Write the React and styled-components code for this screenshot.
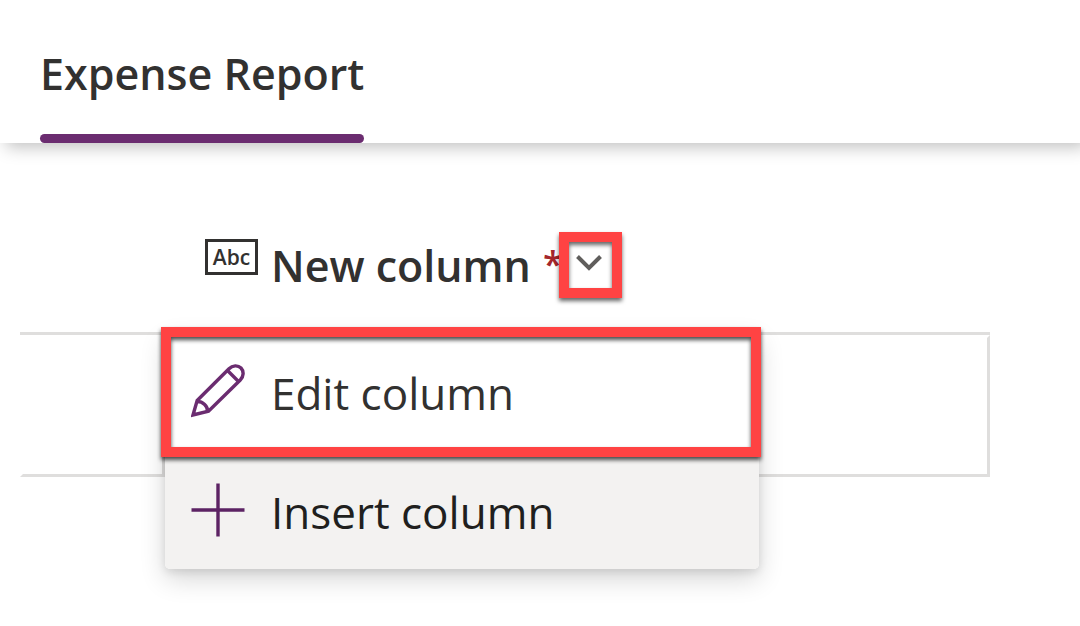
import React from "react";
import styled, { createGlobalStyle } from "styled-components";

const GlobalStyle = createGlobalStyle`
  *, *::before, *::after { box-sizing: border-box; }
  body {
    margin: 0;
    background: #fff;
    color: #323130;
    font-family: "Segoe UI", "Open Sans", "Noto Sans", sans-serif;
    font-size: 44px;
    line-height: 60px;
  }
  button { font: inherit; color: inherit; }
`;

const Page = styled.div`
  min-height: 100vh;
`;

const TabBar = styled.header`
  display: flex;
  padding: 0 40px;
  background: #fff;
  box-shadow: 6px 4px 16px rgba(0, 0, 0, 0.25);
`;

const Tab = styled.button`
  padding: 44px 0 0;
  border: 0;
  background: none;
  font-size: 43px;
  font-weight: 600;
  cursor: pointer;

  &::after {
    content: "";
    display: block;
    height: 9px;
    margin-top: 30px;
    border-radius: 5px;
    background: #6b2c70;
  }
`;

const Main = styled.main`
  padding: 80px 90px 40px 20px;
`;

const Grid = styled.table`
  width: 100%;
  border-collapse: separate;
  border-spacing: 0;
  table-layout: fixed;
`;

const HeadCell = styled.th`
  width: ${(p) => (p.$narrow ? "142px" : "auto")};
  height: 112px;
  padding: 0 0 0 ${(p) => (p.$narrow ? "0" : "43px")};
  border-bottom: 3px solid #dfdedd;
  vertical-align: top;
  text-align: left;
  font-size: 43px;
  font-weight: 600;
`;

const Heading = styled.div`
  display: flex;
  align-items: flex-start;
  padding-top: 9px;
`;

const HeadingText = styled.span`
  padding-top: 4px;
`;

const TypeBadge = styled.span`
  display: flex;
  align-items: center;
  justify-content: center;
  width: 53px;
  height: 36px;
  margin: 7px 13px 0 0;
  border: 3px solid #323130;
  font-size: 21px;
  line-height: 28px;
  font-weight: 600;
`;

const Required = styled.span`
  width: 16px;
  margin-left: 12px;
  color: #a4262c;
  font-size: 36px;
  line-height: 64px;
`;

const MenuToggle = styled.button`
  position: relative;
  display: flex;
  align-items: center;
  justify-content: center;
  width: 63px;
  height: 66px;
  padding: 0 2px 4px 0;
  border: 0;
  background: none;
  cursor: pointer;

  &::after {
    content: "";
    position: absolute;
    inset: 0;
    border: 10px solid #ff4343;
    filter: drop-shadow(0 3px 2px rgba(0, 0, 0, 0.6));
  }
`;

const Cell = styled.td`
  position: relative;
  height: 142px;
  padding: 0;
  border: 3px solid #dfdedd;
  border-top-color: transparent;
  ${(p) => p.$lead && "border-left-color: transparent; border-right: 0;"}
`;

const Menu = styled.div`
  position: absolute;
  top: -7px;
  left: 0;
  width: 594px;
  border-radius: 5px;
  background: #fff;
  box-shadow: 0 10px 26px rgba(0, 0, 0, 0.16), 0 3px 8px rgba(0, 0, 0, 0.1);
`;

const MenuItem = styled.button`
  display: flex;
  align-items: center;
  gap: 26px;
  width: 100%;
  height: 119px;
  padding: 0 26px;
  border: 0;
  border-radius: ${(p) => (p.$active ? "0 0 5px 5px" : "5px 5px 0 0")};
  background: ${(p) => (p.$active ? "#f3f2f1" : "#fff")};
  color: ${(p) => (p.$active ? "#201f1e" : "#323130")};
  text-align: left;
  cursor: pointer;
`;

const ItemLabel = styled.span`
  padding-top: 4px;
`;

const ItemHighlight = styled.div`
  position: absolute;
  top: -4px;
  left: -4px;
  width: 600px;
  height: 130px;
  border: 10px solid #ff4343;
  filter: drop-shadow(0 3px 2px rgba(0, 0, 0, 0.7));
  pointer-events: none;
`;

const Icon = styled.svg`
  flex: none;
  display: block;
  fill: none;
`;

function ChevronIcon() {
  return (
    <Icon width="28" height="18" viewBox="0 0 28 18" stroke="#605e5c" strokeWidth="4" aria-hidden="true">
      <path d="M2.5 2.5 L14 14 L25.5 2.5" />
    </Icon>
  );
}

function PencilIcon() {
  return (
    <Icon width="54" height="54" viewBox="0 0 54 54" stroke="#6b2c70" strokeWidth="3.4" aria-hidden="true">
      <path d="M2 51 L6.2 36.5 L38 4.7 C41.5 1.2 47 1 50 4 C53 7.2 52.8 12.5 49.3 16 L17.5 47.2 Z" />
      <path d="M36.5 6.5 L47.5 17.5" />
      <path d="M6.2 37.5 C12 37.5 16.7 42 16.7 47.4" />
    </Icon>
  );
}

function PlusIcon() {
  return (
    <Icon width="54" height="54" viewBox="0 0 54 54" stroke="#5c2364" strokeWidth="3.4" aria-hidden="true">
      <path d="M27 0.5 V53.5 M0.5 27 H53.5" />
    </Icon>
  );
}

export default function App() {
  return (
    <Page>
      <GlobalStyle />
      <TabBar>
        <Tab type="button">Expense Report</Tab>
      </TabBar>
      <Main>
        <Grid>
          <thead>
            <tr>
              <HeadCell $narrow />
              <HeadCell scope="col">
                <Heading>
                  <TypeBadge>Abc</TypeBadge>
                  <HeadingText>New column</HeadingText>
                  <Required>*</Required>
                  <MenuToggle type="button" aria-label="Column options" aria-expanded="true">
                    <ChevronIcon />
                  </MenuToggle>
                </Heading>
              </HeadCell>
            </tr>
          </thead>
          <tbody>
            <tr>
              <Cell $lead />
              <Cell>
                <Menu>
                  <MenuItem type="button">
                    <PencilIcon />
                    <ItemLabel>Edit column</ItemLabel>
                  </MenuItem>
                  <MenuItem type="button" $active>
                    <PlusIcon />
                    <ItemLabel>Insert column</ItemLabel>
                  </MenuItem>
                  <ItemHighlight />
                </Menu>
              </Cell>
            </tr>
          </tbody>
        </Grid>
      </Main>
    </Page>
  );
}
